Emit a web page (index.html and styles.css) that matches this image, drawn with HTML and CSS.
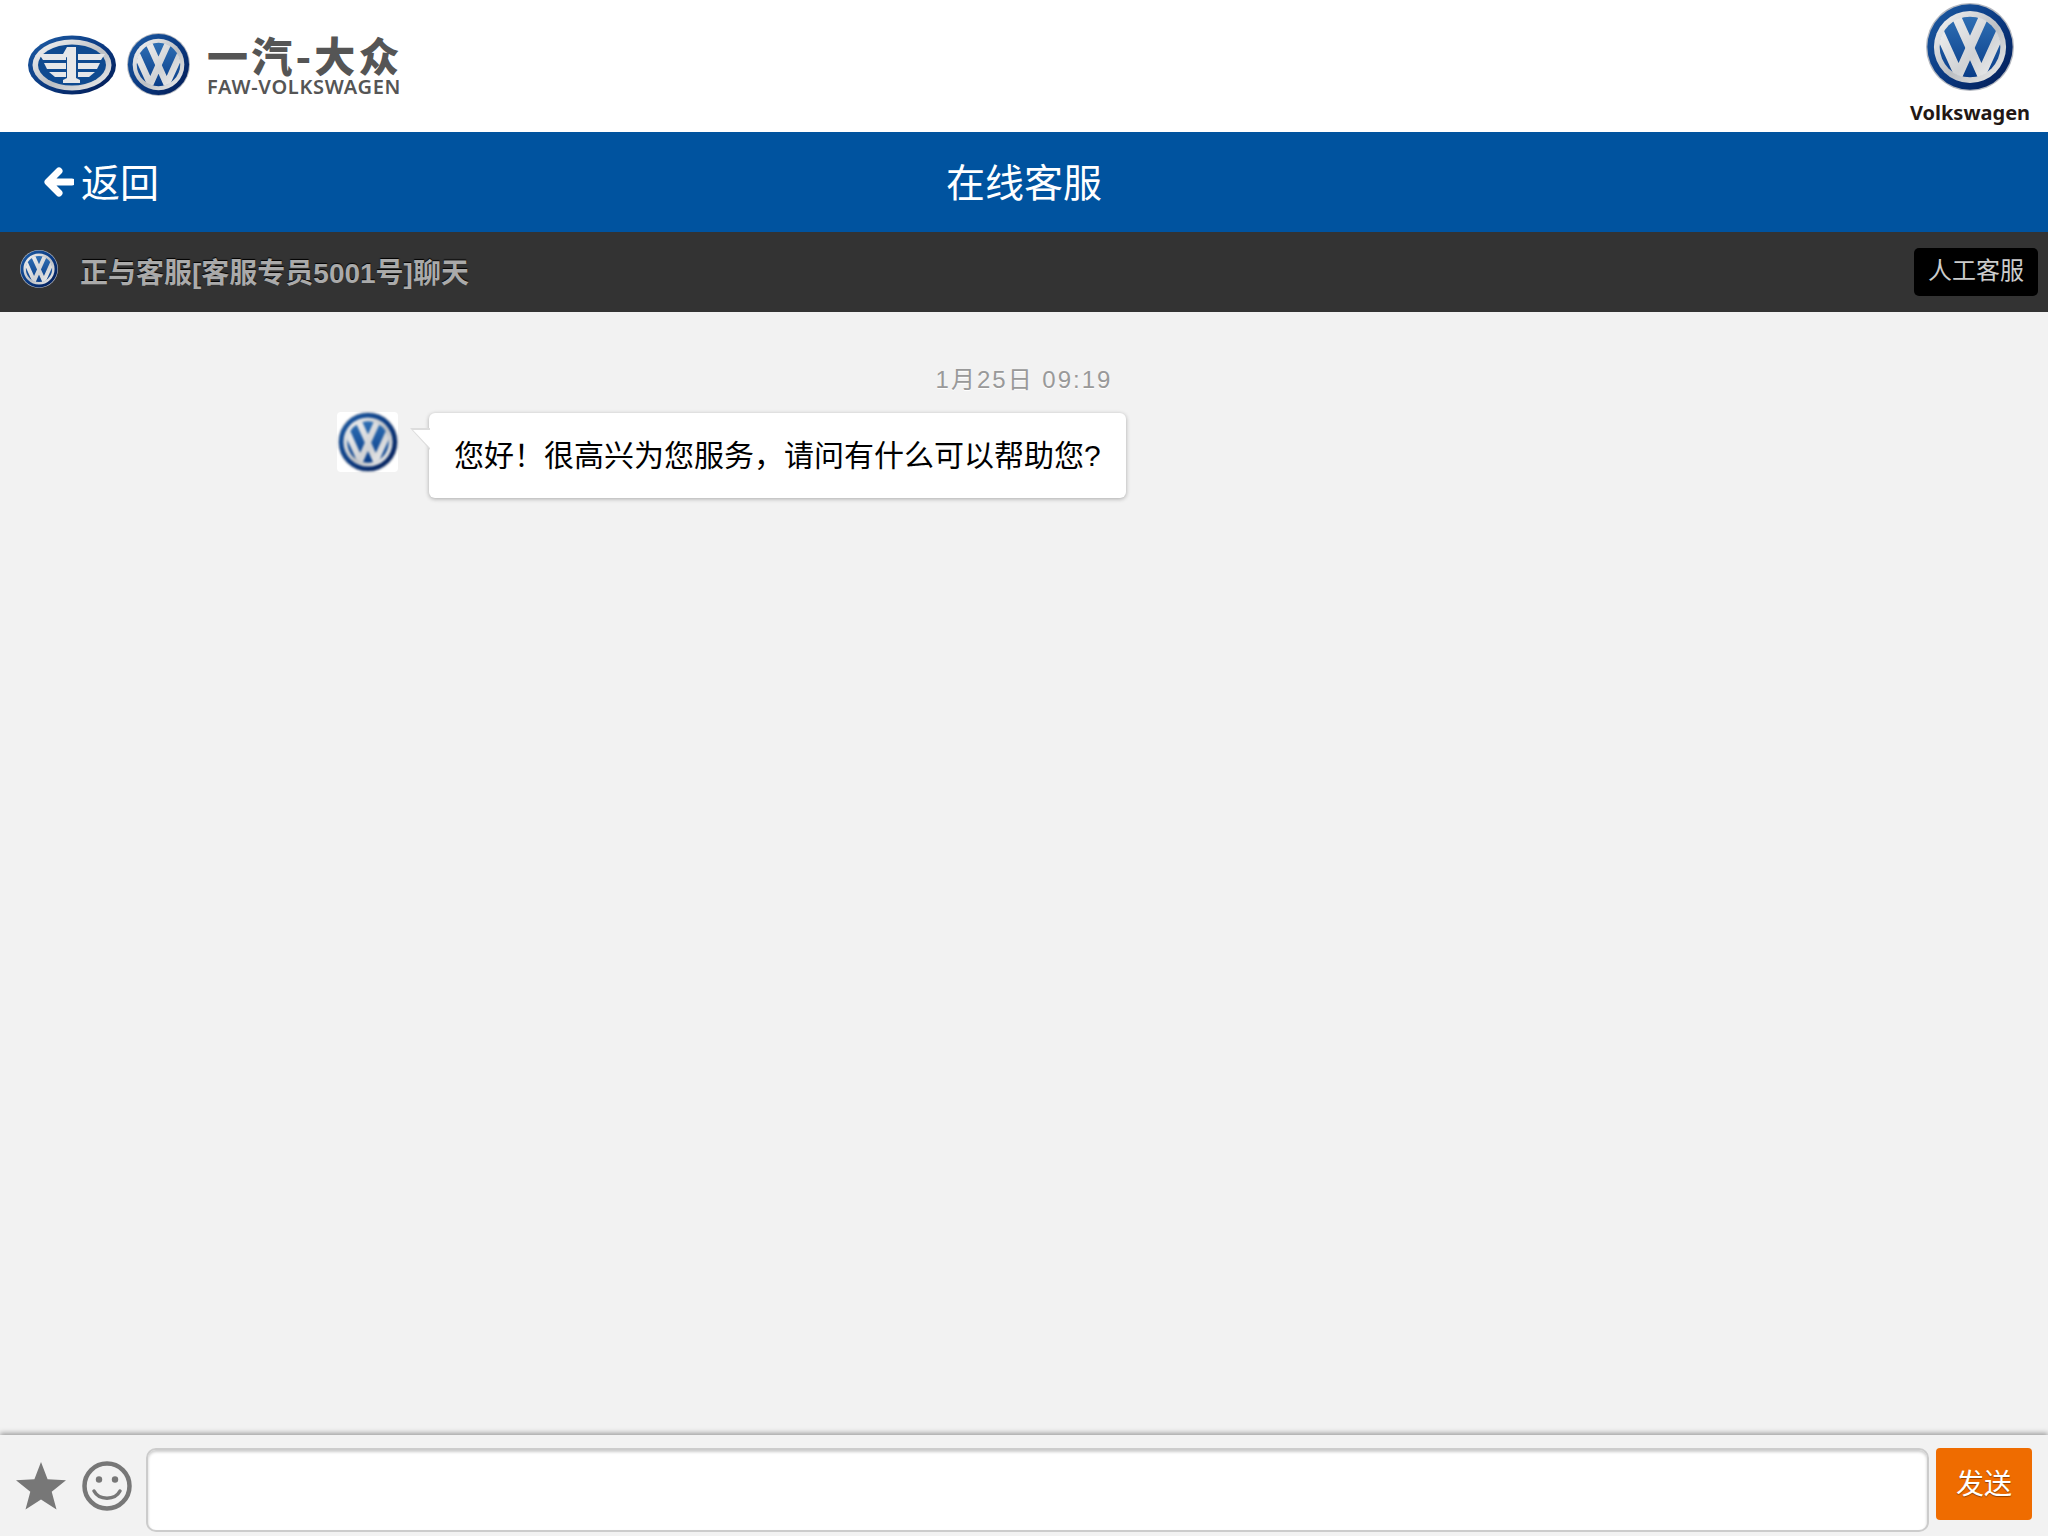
FILE: index.html
```html
<!DOCTYPE html>
<html>
<head>
    <meta charset="UTF-8">
    <title>在线客服</title>
    <link rel="stylesheet" href="styles.css">
</head>

<body>
    <svg class="defs" width="0" height="0">
        <defs>
            <linearGradient id="navy" x1="0" y1="0" x2="1" y2="1">
                <stop offset="0" stop-color="#1f5ea6"/>
                <stop offset="0.5" stop-color="#0a3a82"/>
                <stop offset="1" stop-color="#031a52"/>
            </linearGradient>
            <linearGradient id="silver" x1="0" y1="0" x2="1" y2="1">
                <stop offset="0" stop-color="#f8f8f8"/>
                <stop offset="0.55" stop-color="#bcbfc3"/>
                <stop offset="1" stop-color="#f0f0f0"/>
            </linearGradient>
            <linearGradient id="blue" x1="0" y1="0" x2="0" y2="1">
                <stop offset="0" stop-color="#2f6fb4"/>
                <stop offset="1" stop-color="#083c88"/>
            </linearGradient>
            <linearGradient id="metal" gradientUnits="userSpaceOnUse" x1="10" y1="10" x2="90" y2="85">
                <stop offset="0" stop-color="#f7f7f7"/>
                <stop offset="0.6" stop-color="#d0d2d5"/>
                <stop offset="1" stop-color="#f2f2f2"/>
            </linearGradient>
            <clipPath id="vwclip"><circle cx="50" cy="50" r="35"/></clipPath>
            <symbol id="vw" viewBox="0 0 100 100">
                <circle cx="50" cy="50" r="50" fill="#b4b8c0"/>
                <circle cx="50" cy="50" r="48.500" fill="url(#navy)"/>
                <circle cx="50" cy="50" r="41" fill="url(#silver)"/>
                <circle cx="50" cy="50" r="34.500" fill="url(#blue)"/>
                <g clip-path="url(#vwclip)" fill="none" stroke="url(#metal)" stroke-width="10.500">
                    <polyline points="31,8 50,50 69,8"/>
                    <polyline points="13,28 37,81 50,52 63,81 87,28"/>
                </g>
            </symbol>
        </defs>
    </svg>

    <div class="brand-bar">
        <div class="brand-left">
            <svg class="faw-logo" viewBox="0 0 88 60">
                <ellipse cx="44" cy="30" rx="44" ry="29.500" fill="url(#navy)"/>
                <ellipse cx="44" cy="30" rx="39.500" ry="25.500" fill="url(#silver)"/>
                <ellipse cx="44" cy="30" rx="34" ry="20.500" fill="#0f4a90"/>
                <g fill="#e6e7e9">
                    <path d="M11 19h27v6H15z"/>
                    <path d="M16 28h22v6H19z"/>
                    <path d="M21 37h17v5H27z"/>
                    <path d="M77 19H50v6h23z"/>
                    <path d="M72 28H50v6h19z"/>
                    <path d="M67 37H50v5h11z"/>
                    <path d="M39 12h9v31l4 2v3H35v-3l4-2V22l-4 2v-5z"/>
                </g>
            </svg>
            <svg class="vw-small"><use href="#vw"/></svg>
            <div class="brand-name">
                <div class="brand-cn">一汽-大众</div>
                <div class="brand-en">FAW-VOLKSWAGEN</div>
            </div>
        </div>
        <div class="brand-right">
            <svg class="vw-big"><use href="#vw"/></svg>
            <div class="brand-vw">Volkswagen</div>
        </div>
    </div>

    <div class="title-bar">
        <a class="back">
            <svg class="back-arrow" viewBox="0 0 30 30">
                <path d="M28 15H5M15 4L4 15l11 11" fill="none" stroke="#fff" stroke-width="7" stroke-linecap="round" stroke-linejoin="round"/>
            </svg>
            <span>返回</span>
        </a>
        <div class="title">在线客服</div>
    </div>

    <div class="status-bar">
        <svg class="vw-status"><use href="#vw"/></svg>
        <span class="status-text">正与客服[客服专员5001号]聊天</span>
        <a class="human-btn">人工客服</a>
    </div>

    <div class="chat">
        <div class="chat-time">1月25日 09:19</div>
        <div class="msg">
            <div class="avatar"><svg class="vw-avatar"><use href="#vw"/></svg></div>
            <div class="bubble">您好！很高兴为您服务，请问有什么可以帮助您?</div>
        </div>
    </div>

    <div class="input-bar">
        <svg class="tool-icon star" viewBox="0 0 50 50">
            <path d="M25 1l6.600 17.200 18.400 1-14.300 11.600 4.800 17.800L25 38.600 9.500 48.600l4.800-17.800L0 19.200l18.400-1z" fill="#777"/>
        </svg>
        <svg class="tool-icon smile" viewBox="0 0 50 50">
            <circle cx="25" cy="25" r="22.500" fill="none" stroke="#777" stroke-width="4.500"/>
            <circle cx="17" cy="18.500" r="3.200" fill="#777"/>
            <circle cx="33" cy="18.500" r="3.200" fill="#777"/>
            <path d="M12 30c5 9.500 21 9.500 26 0" fill="none" stroke="#777" stroke-width="3.500" stroke-linecap="round"/>
        </svg>
        <input class="msg-input" type="text">
        <a class="send-btn">发送</a>
    </div>
</body>

</html>
```

FILE: styles.css
```css
* {
    box-sizing: border-box;
}

html, body {
    height: 100%;
}

body {
    margin: 0;
    display: flex;
    flex-direction: column;
    background-color: #f2f2f2;
    font-family: "Liberation Sans", "Noto Sans CJK SC", sans-serif;
    overflow: hidden;
}

.defs {
    position: absolute;
}

/* top logos */
.brand-bar {
    height: 132px;
    flex: none;
    display: flex;
    justify-content: space-between;
    background-color: #fff;
}

.brand-left {
    display: flex;
    align-items: center;
    padding: 0 0 3px 28px;
}

.faw-logo {
    width: 88px;
    height: 60px;
    filter: blur(0.4px);
}

.vw-small {
    width: 63px;
    height: 63px;
    margin-left: 11px;
    filter: blur(0.4px);
}

.brand-name {
    margin-left: 17px;
    color: #555;
}

.brand-cn {
    font-family: "Noto Sans CJK SC", sans-serif;
    font-size: 41px;
    font-weight: 900;
    line-height: 42px;
    letter-spacing: 3.200px;
    white-space: nowrap;
}

.brand-en {
    margin-top: 2px;
    font-family: "Noto Sans", sans-serif;
    font-size: 20px;
    font-weight: 600;
    line-height: 20px;
    letter-spacing: 0.700px;
    white-space: nowrap;
}

.brand-right {
    width: 136px;
    padding: 3px 20px 0 0;
    display: flex;
    flex-direction: column;
    align-items: center;
}

.vw-big {
    width: 88px;
    height: 88px;
}

.brand-vw {
    margin-top: 10px;
    font-family: "Noto Sans", sans-serif;
    font-size: 20px;
    font-weight: 700;
    line-height: 24px;
    color: #231815;
}

/* blue title */
.title-bar {
    height: 100px;
    flex: none;
    display: flex;
    align-items: center;
    justify-content: center;
    position: relative;
    background-color: #00539f;
    color: #fff;
    font-size: 39px;
}

.title {
    margin-top: -5px;
}

.back {
    position: absolute;
    left: 44px;
    top: 0;
    height: 100%;
    display: flex;
    align-items: center;
}

.back span {
    margin-top: -5px;
}

.back-arrow {
    width: 30px;
    height: 30px;
    margin-right: 7px;
}

/* status line */
.status-bar {
    height: 80px;
    flex: none;
    display: flex;
    align-items: center;
    padding: 0 10px 0 20px;
    background-color: #333;
}

.vw-status {
    width: 38px;
    height: 38px;
    margin: -6px 22px 0 0;
    filter: blur(0.7px);
}

.status-text {
    flex: 1;
    margin-top: -2px;
    color: #aaa;
    font-size: 28px;
    font-weight: bold;
    text-shadow: 0 -1px 1px #000;
}

.human-btn {
    width: 124px;
    height: 48px;
    line-height: 46px;
    text-align: center;
    background-color: #000;
    border-radius: 5px;
    color: #ccc;
    font-size: 24px;
}

/* messages */
.chat {
    flex: 1;
    width: 1374px;
    margin: 0 auto;
    padding-top: 48px;
}

.chat-time {
    height: 52px;
    line-height: 40px;
    text-align: center;
    font-size: 24px;
    letter-spacing: 2px;
    color: #999;
    text-shadow: 0 1px 0 #fff;
}

.msg {
    display: flex;
    align-items: flex-start;
}

.avatar {
    width: 61px;
    height: 60px;
    padding-left: 1px;
    background-color: #fff;
    border-radius: 4px;
}

.vw-avatar {
    display: block;
    width: 60px;
    height: 60px;
    filter: blur(0.8px);
}

.bubble {
    position: relative;
    margin: 1px 0 0 31px;
    height: 85px;
    padding: 0 25px;
    line-height: 85px;
    font-size: 30px;
    color: #000;
    background-color: #fff;
    border-radius: 6px;
    box-shadow: 0 1px 4px rgba(0, 0, 0, 0.3);
    white-space: nowrap;
}

.bubble::before {
    content: "";
    position: absolute;
    left: -19px;
    top: 15px;
    width: 20px;
    height: 22px;
    background-color: #ddd;
    clip-path: polygon(0 0, 100% 0, 100% 100%);
}

.bubble::after {
    content: "";
    position: absolute;
    left: -16px;
    top: 17px;
    width: 17px;
    height: 18px;
    background-color: #fff;
    clip-path: polygon(0 0, 100% 0, 100% 100%);
}

/* bottom input */
.input-bar {
    height: 101px;
    flex: none;
    display: flex;
    align-items: flex-start;
    padding: 13px 16px 0 16px;
    background-color: #f2f2f2;
    box-shadow: 0 -2px 5px rgba(0, 0, 0, 0.35);
}

.tool-icon {
    width: 50px;
    height: 50px;
    margin-top: 13px;
}

.smile {
    margin-left: 16px;
}

.msg-input {
    flex: 1;
    height: 84px;
    margin: 0 7px 0 14px;
    padding: 5px;
    background-color: #fff;
    border: 2px solid #ccc;
    border-radius: 10px;
    outline: none;
    box-shadow: inset 0 2px 3px rgba(0, 0, 0, 0.2);
}

.send-btn {
    width: 96px;
    height: 72px;
    line-height: 74px;
    text-align: center;
    background-color: #ef6c00;
    border-radius: 4px;
    color: #fff;
    font-size: 28px;
    text-shadow: 0 1px 1px rgba(0, 0, 0, 0.4);
}
```
